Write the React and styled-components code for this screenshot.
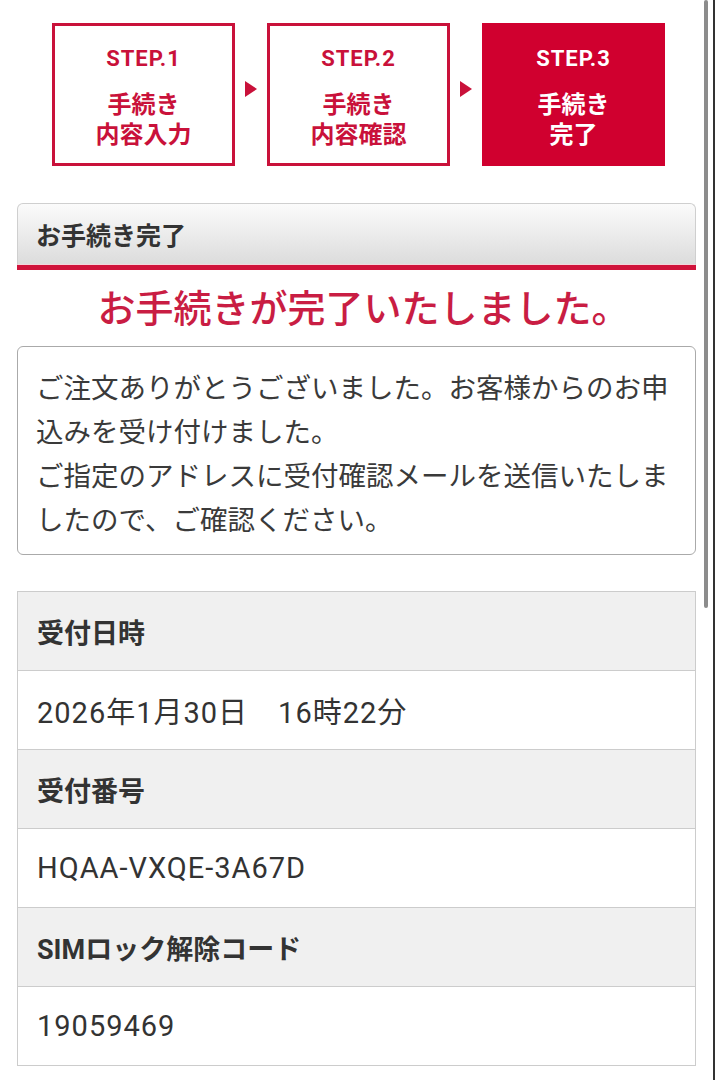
import React from 'react';
import styled, { createGlobalStyle } from 'styled-components';

const GlobalStyle = createGlobalStyle`
  html, body {
    margin: 0;
    padding: 0;
    background: #fff;
    overflow: hidden;
  }
  body {
    font-family: "Noto Sans CJK JP", "Noto Sans", sans-serif;
    color: #333;
  }
`

const Page = styled.div`
  position: relative;
  display: flex;
  width: 715px;
  height: 1080px;
  overflow: hidden;
`

const Main = styled.div`
  width: 713px;
  flex: none;
  box-sizing: border-box;
  padding: 23px 17px 0;
`

const RightEdge = styled.div`
  width: 2px;
  flex: none;
  background: #333;
`

const ScrollThumb = styled.div`
  position: absolute;
  top: 0;
  left: 704px;
  width: 4px;
  height: 608px;
  border-radius: 2px;
  background: #8c8c8c;
`

const StepRow = styled.div`
  display: flex;
  align-items: center;
  justify-content: center;
  gap: 10px;
  margin-left: 4px;
`

const StepBox = styled.div`
  width: 183px;
  height: 143px;
  box-sizing: border-box;
  border: 3px solid ${p => (p.$active ? '#d0002f' : '#c9113a')};
  background: ${p => (p.$active ? '#d0002f' : '#fff')};
  color: ${p => (p.$active ? '#fff' : '#c9113a')};
  display: flex;
  flex-direction: column;
  align-items: center;
  padding-top: 18px;
  font-weight: 700;
`

const StepNo = styled.div`
  font-family: "Roboto", "Noto Sans CJK JP", sans-serif;
  font-size: 22px;
  line-height: 30px;
  letter-spacing: 1px;
`

const StepLabel = styled.div`
  margin-top: 14px;
  display: flex;
  flex-direction: column;
  align-items: center;
`

const StepLine = styled.span`
  font-size: 24px;
  line-height: 30px;
  white-space: nowrap;
`

const Arrow = styled.div`
  width: 0;
  height: 0;
  border-top: 8px solid transparent;
  border-bottom: 8px solid transparent;
  border-left: 12px solid #c9113a;
  margin-top: -12px;
`

const SectionHead = styled.div`
  margin-top: 37px;
  height: 62px;
  box-sizing: border-box;
  border: 1px solid #cfcfcf;
  border-bottom: 1px solid #f3d6dc;
  border-radius: 6px 6px 0 0;
  background: linear-gradient(#fbfbfb, #dcdcdc);
  display: flex;
  align-items: center;
  padding-left: 18px;
  font-size: 25px;
  font-weight: 700;
  color: #333;
`

const RedBar = styled.div`
  height: 5px;
  background: #d0133b;
`

const Title = styled.h1`
  margin: 0;
  font-size: 38px;
  line-height: 72px;
  padding: 0 0 4px 14px;
  font-weight: 500;
  text-align: center;
  color: #c91d43;
`

const MessageBox = styled.div`
  border: 1px solid #aaa;
  border-radius: 6px;
  padding: 17px 18px 14px;
  font-size: 27.5px;
  line-height: 44px;
  color: #3a3a3a;
`

const InfoTable = styled.div`
  margin-top: 36px;
  border: 1px solid #cccccc;
`

const Cell = styled.div`
  height: 78px;
  display: flex;
  align-items: center;
  padding-left: 19px;
  background: ${p => (p.$head ? '#f0f0f0' : '#fff')};
  border-top: ${p => (p.$first ? 'none' : '1px solid #cccccc')};
  font-family: "Roboto", "Noto Sans CJK JP", sans-serif;
  font-size: ${p => (p.$head ? '27px' : '29px')};
  font-weight: ${p => (p.$head ? 700 : 400)};
  letter-spacing: ${p => (p.$head ? '0' : '1px')};
  color: #333;
`

const steps = [
  { no: 'STEP.1', label: ['手続き', '内容入力'] },
  { no: 'STEP.2', label: ['手続き', '内容確認'] },
  { no: 'STEP.3', label: ['手続き', '完了'], active: true },
]

const rows = [
  ['受付日時', '2026年1月30日　16時22分'],
  ['受付番号', 'HQAA-VXQE-3A67D'],
  ['SIMロック解除コード', '19059469'],
]

export default function App() {
  return (
    <Page>
      <GlobalStyle />
      <Main>
        <StepRow>
          {steps.map((s, i) => (
            <React.Fragment key={s.no}>
              {i > 0 && <Arrow />}
              <StepBox $active={s.active}>
                <StepNo>{s.no}</StepNo>
                <StepLabel>
                  {s.label.map(line => (
                    <StepLine key={line}>{line}</StepLine>
                  ))}
                </StepLabel>
              </StepBox>
            </React.Fragment>
          ))}
        </StepRow>

        <SectionHead>お手続き完了</SectionHead>
        <RedBar />
        <Title>お手続きが完了いたしました。</Title>

        <MessageBox>
          ご注文ありがとうございました。お客様からのお申込みを受け付けました。
          <br />
          ご指定のアドレスに受付確認メールを送信いたしましたので、ご確認ください。
        </MessageBox>

        <InfoTable>
          {rows.map(([head, value], i) => (
            <React.Fragment key={head}>
              <Cell $head $first={i === 0}>{head}</Cell>
              <Cell>{value}</Cell>
            </React.Fragment>
          ))}
        </InfoTable>
      </Main>
      <RightEdge />
      <ScrollThumb />
    </Page>
  );
}
